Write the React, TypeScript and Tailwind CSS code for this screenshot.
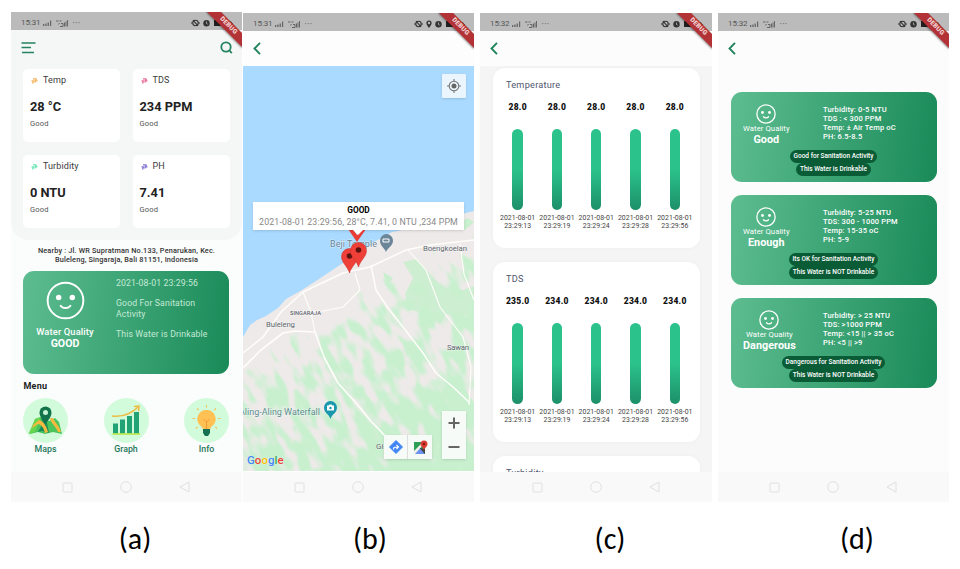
import React from "react";

function StatusBar({ time, pin = false }: { time: string; pin?: boolean }) {
  return (
    <div className="flex h-[18px] shrink-0 items-center justify-between bg-[#bbbbbb] pl-[10px] pr-[9px] pt-[4px] text-[8px] leading-none text-[#555]">
      <div className="flex items-center gap-[3px]">
        <span className="tracking-[-0.100px]">{time}</span>
        <svg width="10" height="6" viewBox="0 0 10 6" fill="#666">
          <path d="M0 4h1.3v2H0zM2.3 3.4h1.3V6H2.3zM4.6 2.4h1.3V6H4.6zM7 .6h1.2V6H7z" />
        </svg>
        <svg width="13" height="7" viewBox="0 0 13 7" fill="none" stroke="#666" strokeWidth="1">
          <path d="M0 1h2.5M3.5 1h2M2.5 4.5l1-1.5M4 6.5h3M5 3.500h2v3M8.500 6.500v-4M10 6.500v-5M11.500 6.500V0" />
        </svg>
        <span className="text-[8px] font-bold tracking-[0.300px] text-[#777]">···</span>
      </div>
      <div className="flex items-center gap-[3px]">
        <svg width="9" height="8" viewBox="0 0 9 8" fill="none" stroke="#333" strokeWidth="1.100">
          <path d="M0 4h1.600M7.400 4H9M2 1.200l5 5.600" />
          <circle cx="4.500" cy="4" r="2.700" />
        </svg>
        {pin && (
          <svg width="6" height="8" viewBox="0 0 6 8">
            <path d="M3 8C1.400 5.800.400 4.400.400 3a2.600 2.600 0 0 1 5.200 0C5.600 4.400 4.600 5.800 3 8z" fill="#333" />
            <circle cx="3" cy="3" r="1.200" fill="#bbb" />
          </svg>
        )}
        <svg width="7" height="8" viewBox="0 0 7 8">
          <circle cx="3.500" cy="4.200" r="3.200" fill="#333" />
          <path d="M3.500 2.500v2l1.200.600M.400.800l1.200-.600M5.400.200l1.200.600" stroke="#bbb" strokeWidth=".8" fill="none" />
        </svg>
        <svg width="20" height="8" viewBox="0 0 20 8">
          <rect x="1" y="1" width="7" height="6" fill="#222" />
          <path d="M11 1v6h2M15 6l3-4M18.500 3v3M17 4.500h3" stroke="#444" fill="none" />
        </svg>
      </div>
    </div>
  );
}

function DebugRibbon() {
  return (
    <div className="pointer-events-none absolute right-0 top-0 size-[42px] overflow-hidden">
      <div className="absolute left-[2.500px] top-[9.300px] flex h-[10.200px] w-[50px] rotate-45 items-center justify-center bg-[#b23235] text-[6.500px] font-black tracking-[0.200px] text-[#f3d5d5] shadow-[0_1px_2px_rgba(0,0,0,0.400)]">
        DEBUG
      </div>
    </div>
  );
}

function NavBar() {
  return (
    <div className="flex h-[30px] shrink-0 items-center justify-center gap-[47px] bg-[#f9f9f9] pr-px">
      <svg width="11" height="11" viewBox="0 0 11 11" fill="none" stroke="#e0e0e0">
        <rect x="1" y="1" width="9" height="9" rx="1" />
      </svg>
      <svg width="12" height="12" viewBox="0 0 12 12" fill="none" stroke="#e0e0e0">
        <circle cx="6" cy="6" r="5.300" />
      </svg>
      <svg width="11" height="12" viewBox="0 0 11 12" fill="none" stroke="#e0e0e0" strokeLinejoin="round">
        <path d="M10 1v10L1 6z" />
      </svg>
    </div>
  );
}

function BackHeader() {
  return (
    <div className="h-[35px] shrink-0 pl-[10px] pt-[11px]">
      <svg width="8" height="13" viewBox="0 0 8 13" fill="none" stroke="#20835c" strokeWidth="1.900">
        <path d="M7 .800L1.500 6.500 7 12.200" />
      </svg>
    </div>
  );
}

function Smiley({ size, stroke }: { size: number; stroke: number }) {
  return (
    <svg width={size} height={size} viewBox="0 0 40 40" fill="none" stroke="#fff" strokeWidth={stroke} strokeLinecap="round" className="shrink-0">
      <circle cx="20" cy="20" r="18.300" />
      <circle cx="13" cy="17" r="2.800" fill="#fff" stroke="none" />
      <circle cx="27" cy="17" r="2.800" fill="#fff" stroke="none" />
      <path d="M15 25.500c2.500 3 7.500 3 10 0" />
    </svg>
  );
}

function Metric({ color, name, value }: { color: string; name: string; value: string }) {
  return (
    <div className="flex h-[73px] w-[97px] flex-col rounded-[5px] bg-white pl-[7px] pt-[5px]">
      <div className="flex h-[14px] items-center gap-[5px] pl-px text-[9px] tracking-[0.100px] text-[#3a3a3a]">
        <svg width="7" height="6" viewBox="0 0 7 6" stroke={color} strokeWidth="1.300" fill="none" opacity=".85">
          <path d="M2 .800h3.500M.500 2.800h2M3.500 2.800h3M1.500 5.500l1.200-3M3.800 4.500L5.500.800" />
        </svg>
        {name}
      </div>
      <div className="mt-[10px] h-[18px] text-[12.800px] font-bold leading-[18px] text-[#222]">{value}</div>
      <div className="mt-[3px] h-[10px] text-[7.600px] leading-[10px] tracking-[0.100px] text-[#555]">Good</div>
    </div>
  );
}

function MapsIcon() {
  return (
    <svg width="45" height="45" viewBox="0 0 45 45">
      <circle cx="22.500" cy="22.500" r="22.500" fill="#d2fbdc" />
      <path d="M12 21l6-2 8 4 6-3 4 4 3 12-9-2-8 2-7-2-8 2z" fill="#4bc45c" />
      <path d="M12 21l6-2-6 15-6.500 2z" fill="#69d650" />
      <path d="M18 20l6 5 2 10-7-2-4 1 5-9z" fill="#188c58" />
      <path d="M10 27l6-5c4 1 7 5 9 12l-3 1c-1-5-4-9-7-9l-6 4zM27 20h3c2 5 6 7 8 14h-3c-2-6-7-8-8-14z" fill="#f7b840" />
      <path d="M22.500 26c-4-5-6-8-6-11.500a6 6 0 0 1 12 0c0 3.500-2 6.500-6 11.500z" fill="#13744b" />
      <circle cx="22.500" cy="14.500" r="2.500" fill="#c7f3d6" />
    </svg>
  );
}

function GraphIcon() {
  return (
    <svg width="45" height="45" viewBox="0 0 45 45">
      <circle cx="22.500" cy="22.500" r="22.500" fill="#d2fbdc" />
      <path d="M9 25.500h5v10H9zM16 21.500h5v14h-5zM23 18h5v17.500h-5zM30 14h5v21.500h-5z" fill="#22a375" />
      <path d="M8.500 36h27.500" stroke="#b6e63c" strokeWidth="1.500" />
      <path d="M8 18c9 1 19-2 26-9M30 8.500l5-.5-.500 5" fill="none" stroke="#edbc42" strokeWidth="1.500" />
    </svg>
  );
}

function InfoIcon() {
  return (
    <svg width="45" height="45" viewBox="0 0 45 45">
      <circle cx="22.500" cy="22.500" r="22.500" fill="#d2fbdc" />
      <path d="M22.500 12a9 9 0 0 0-6 15.800c1.700 1.600 2.300 2.700 2.500 4.200h7c.2-1.500.8-2.600 2.500-4.200A9 9 0 0 0 22.500 12z" fill="#ffc154" />
      <path d="M22.500 31v-8m-3-2l3 3 3-3" stroke="#f49a34" fill="none" />
      <path d="M19 31h7v4l-2 3h-3l-2-3z" fill="#167052" />
      <path d="M22.500 7v2.500M13 10.500l1.700 1.700M32 10.500l-1.700 1.700M8.500 20.500h2.500M36.500 20.500H34M12 30.500l1.500-1.500M33 30.500L31.500 29" stroke="#efc65b" strokeWidth="1.200" />
    </svg>
  );
}

const menu = [
  { label: "Maps", icon: <MapsIcon /> },
  { label: "Graph", icon: <GraphIcon /> },
  { label: "Info", icon: <InfoIcon /> },
];

function HomeScreen() {
  return (
    <Phone time="15:31" className="h-[490px] w-[231px] bg-[#fbfcfc]">
      <div className="flex h-[210px] shrink-0 flex-col rounded-b-[18px] bg-[#f5f7f7] pl-[12px] pr-[12.500px]">
        <div className="flex h-[38.500px] items-start justify-between pt-[12px]">
          <svg width="15" height="12" viewBox="0 0 15 12" fill="none" stroke="#24845f" strokeWidth="1.600" className="-ml-[2px]">
            <path d="M.500 1h14M.500 5.500h9.500M1 10.500h12" />
          </svg>
          <svg width="13" height="13" viewBox="0 0 13 13" fill="none" stroke="#24845f" strokeWidth="1.800" className="-mr-[3px] -mt-px">
            <circle cx="6" cy="6" r="4.700" />
            <path d="M9.500 9.500l2.300 2.600" />
          </svg>
        </div>
        <div className="flex flex-wrap justify-between gap-y-[13px]">
          <Metric color="#f3a33b" name="Temp" value="28 °C" />
          <Metric color="#e8528a" name="TDS" value="234 PPM" />
          <Metric color="#4fe0a8" name="Turbidity" value="0 NTU" />
          <Metric color="#6c57c9" name="PH" value="7.41" />
        </div>
      </div>
      <div className="mt-[6px] whitespace-nowrap text-center text-[7.300px] font-medium leading-[9px] tracking-[0.170px] text-[#333]">
        Nearby : Jl. WR Supratman No.133, Penarukan, Kec.
        <br />
        Buleleng, Singaraja, Bali 81151, Indonesia
      </div>
      <div className="ml-[12px] mr-[13px] mt-[6.500px] flex h-[103.500px] shrink-0 rounded-[11px] bg-linear-[97deg] from-[#5dbd90] to-[#1a8a59]">
        <div className="flex w-[84px] flex-col items-center pt-[10px] text-[9.300px] font-medium text-white">
          <Smiley size={39} stroke={2} />
          <div className="mt-[6px] h-[12px] leading-[12px] tracking-[0.150px]">Water Quality</div>
          <div className="text-[10.600px] font-bold leading-[12px]">GOOD</div>
        </div>
        <div className="ml-[9px] whitespace-nowrap pt-[7px] text-[8.700px] leading-[10.500px] tracking-[0.130px] text-[#c4ead6]">
          <div>2021-08-01 23:29:56</div>
          <div className="mt-[10px]">
            Good For Sanitation
            <br />
            Activity
          </div>
          <div className="mt-[10px]">This Water is Drinkable</div>
        </div>
      </div>
      <div className="ml-[12.500px] mt-[6px] text-[9px] font-bold leading-[13px] tracking-[0.200px] text-[#222]">Menu</div>
      <div className="ml-[12px] mr-[13px] mt-[5px] flex justify-between">
        {menu.map((item) => (
          <div key={item.label} className="flex flex-col items-center">
            {item.icon}
            <div className="text-[8.800px] font-medium leading-[13px] text-[#24785a]">{item.label}</div>
          </div>
        ))}
      </div>
    </Phone>
  );
}

function Marker({ x, y }: { x: number; y: number }) {
  return (
    <g transform={`translate(${x} ${y})`}>
      <path d="M0 0C-2-7-8-10-8-16.500a8 8 0 0 1 16 0C8-10 2-7 0 0z" fill="#ee4038" stroke="#c52f2c" strokeWidth=".5" />
      <circle cx="0" cy="-17" r="2.800" fill="#5d1411" />
    </g>
  );
}

function MapCanvas() {
  const coast = "M231 145l-16 4-18 4-22 8-26 5-16 9-15 11-21 13-24 16-14 9-16 9-8 9-12 8-9 4-7 5-7 12V405h231z";
  return (
    <svg width="231" height="405" viewBox="0 0 231 405" className="absolute inset-0">
      <defs>
        <clipPath id="land">
          <path d={coast} />
        </clipPath>
        <linearGradient id="density" x1="0" y1="0" x2="0" y2="1">
          <stop offset="0.360" stopColor="#000" stopOpacity="0" />
          <stop offset="0.470" stopColor="#000" stopOpacity="0.440" />
          <stop offset="0.620" stopColor="#000" stopOpacity="0.520" />
          <stop offset="0.740" stopColor="#000" stopOpacity="0.680" />
        </linearGradient>
        <filter id="terrain" x="0" y="0" width="1" height="1" colorInterpolationFilters="sRGB">
          <feTurbulence type="fractalNoise" baseFrequency="0.090 0.040" numOctaves="2" seed="8" />
          <feColorMatrix values="0 0 0 0 0  0 0 0 0 0  0 0 0 0 0  1 0 0 0 0" result="noise" />
          <feComposite in="SourceAlpha" in2="noise" operator="arithmetic" k1="0" k2="1" k3="1" k4="-0.880" />
          <feComponentTransfer result="mask">
            <feFuncA type="linear" slope="5" />
          </feComponentTransfer>
          <feFlood floodColor="#c8f0cf" />
          <feComposite in2="mask" operator="in" />
        </filter>
      </defs>
      <rect width="231" height="405" fill="#aadaff" />
      <g clipPath="url(#land)">
        <rect width="231" height="405" fill="#eeeae9" />
        <g transform="rotate(-28 115 280)">
          <rect x="-120" y="20" width="480" height="520" fill="url(#density)" filter="url(#terrain)" />
        </g>
        <path d="M160 196l14-3 14 16 12 12 20 3 11-4v24l-16 8-12-4-6 10-16-12-14-2-5-16 8-16z" fill="#c8efce" opacity=".85" />
        <path d="M214 160l10-8 7 4-9 8zM140 206l10 6-6 8z" fill="#c8efce" />
        <g fill="none" stroke="#fffdfa" strokeLinejoin="round">
          <path d="M0 287l20-16 18-25 22-20 40-19 27-6 36-17 24-5 44-5" strokeWidth="1.500" />
          <path d="M0 302l18-18 22-17 12-2 20 1 9 25 14 26 18 20 14 17 16 17" strokeWidth="1.600" />
          <path d="M128 199l5 25 12 18 15 19 20 26 13 20 17 14 17 16" strokeWidth="1.500" />
          <path d="M60 226l8 20 4 20M50 246l30-1 20-4 17-17-5-17M165 184l18 20 14 37 23 30 8 30-2 38M217 178l4 30 10 26" strokeWidth="1.100" />
        </g>
      </g>
      <g className="font-[Roboto]" fontSize="8.500" fill="#5d666e" stroke="#fff" strokeOpacity=".5" strokeWidth="1" paintOrder="stroke">
        <text x="87" y="180.500" fontSize="9" fill="#6b8496" textLength="47">Beji Temple</text>
        <text x="180" y="185" fontSize="7.800" textLength="44">Boengkoelan</text>
        <text x="47" y="248.500" fontSize="5.800" fontWeight="500" textLength="31">SINGARAJA</text>
        <text x="23" y="261" fontSize="7.800" textLength="29">Buleleng</text>
        <text x="204" y="283.500" fontSize="7.800" textLength="22">Sawan</text>
        <text x="-4" y="349" fontSize="9" fill="#5b8d8d" textLength="81">Aling-Aling Waterfall</text>
        <text x="133" y="383" fontSize="8">Gi</text>
      </g>
      <path d="M143 186c-1.500-4-6-6-6-11.500a6.500 6.500 0 0 1 13 0c0 5.500-5.500 7.500-7 11.500z" fill="#6b8699" />
      <path d="M140 173h6v3h-6z" fill="none" stroke="#fff" />
      <path d="M87.500 353c-1.500-5-6.500-6-6.500-11.500a6.500 6.500 0 0 1 13 0c0 5.500-5 6.500-6.500 11.500z" fill="#1997ad" />
      <path d="M84 339.500h1.500l1-1h2l1 1H91v5h-7z" fill="#fff" />
      <circle cx="87.500" cy="342" r="1.200" fill="#1997ad" />
      <path d="M105 163l9 13 9-13h-5l-4 6-4-6z" fill="#e93d37" />
      <Marker x={106.500} y={207} />
      <Marker x={115.500} y={201} />
    </svg>
  );
}

function MapScreen() {
  return (
    <Phone time="15:31" pin className="mt-px h-[489px] w-[231px] bg-[#fdfdfd]">
      <BackHeader />
      <div className="relative h-[405px] shrink-0 overflow-hidden">
        <MapCanvas />
        <div className="absolute right-[8px] top-[8px] flex size-[24px] items-center justify-center rounded-[1px] bg-[#eaf5fd] shadow-sm">
          <svg width="14" height="14" viewBox="0 0 14 14" fill="none" stroke="#777" strokeWidth="1.100">
            <circle cx="7" cy="7" r="4.800" />
            <circle cx="7" cy="7" r="2.500" fill="#666" stroke="none" />
            <path d="M7 0v2.500M7 11.500V14M0 7h2.500M11.500 7H14" />
          </svg>
        </div>
        <div className="absolute left-[10px] top-[136px] h-[28px] w-[211px] bg-white pt-[3px] text-center shadow-sm">
          <div className="text-[8.300px] font-bold leading-[11px] text-black">GOOD</div>
          <div className="whitespace-nowrap text-[8.800px] leading-[12px] tracking-[0.140px] text-[#888]">2021-08-01 23:29:56, 28°C, 7.41, 0 NTU ,234 PPM</div>
        </div>
        <div className="absolute left-[110px] top-[164px]">
          <svg width="10" height="5" viewBox="0 0 10 5" fill="#fff">
            <path d="M0 0h10L5 5z" />
          </svg>
        </div>
        <div className="absolute bottom-[4px] left-[4px] text-[11.500px] font-medium leading-[14px] [text-shadow:0_0_1px_#fff]">
          <span className="text-[#4285f4]">G</span>
          <span className="text-[#ea4335]">o</span>
          <span className="text-[#fbbc05]">o</span>
          <span className="text-[#4285f4]">g</span>
          <span className="text-[#34a853]">l</span>
          <span className="text-[#ea4335]">e</span>
        </div>
        <div className="absolute bottom-[12px] left-[141px] flex h-[24px] w-[48px] divide-x divide-[#ddd] bg-[#f7fbf8] shadow-sm">
          <div className="flex w-[24px] items-center justify-center">
            <svg width="14" height="14" viewBox="0 0 14 14">
              <path d="M7 .500L13.500 7 7 13.500.500 7z" fill="#4285f4" stroke="#4285f4" strokeLinejoin="round" />
              <path d="M4.500 9.500c0-2 .5-2.500 4-2.500M7.500 5l2 2-2 2" fill="none" stroke="#fff" strokeWidth="1.200" />
            </svg>
          </div>
          <div className="flex w-[24px] items-center justify-center">
            <svg width="15" height="15" viewBox="0 0 15 15">
              <rect x="1" y="2" width="11" height="12" fill="#2d9e58" />
              <path d="M1 14l6-6 5 6z" fill="#6c91ef" />
              <path d="M1 11l8-8 1.500 1.500L2 14H1z" fill="#f3f2e9" />
              <path d="M6.500 8l5.500 6V9z" fill="#444" />
              <path d="M11 10c-1-2.500-3.500-3.500-3.500-6a3.500 3.500 0 0 1 7 0c0 2.500-2.500 3.500-3.500 6z" fill="#dc3c32" />
              <circle cx="11" cy="4" r="1.200" fill="#7d1915" />
            </svg>
          </div>
        </div>
        <div className="absolute bottom-[12px] right-[8px] flex h-[48px] w-[24px] flex-col items-center justify-around bg-[#f7fbf8] shadow-sm">
          <svg width="12" height="12" viewBox="0 0 12 12" stroke="#666" strokeWidth="2">
            <path d="M.500 6h11M6 .500v11" />
          </svg>
          <svg width="12" height="12" viewBox="0 0 12 12" stroke="#666" strokeWidth="2">
            <path d="M.500 6h11" />
          </svg>
        </div>
      </div>
    </Phone>
  );
}

const times = ["23:29:13", "23:29:19", "23:29:24", "23:29:28", "23:29:56"];

function ChartCard({ title, values }: { title: string; values: string[] }) {
  return (
    <div className="h-[180px] shrink-0 rounded-[12px] bg-white px-[5px] pt-[10px] shadow-[0_0_5px_rgba(0,0,0,0.030)]">
      <div className="pl-[8.500px] text-[9.200px] leading-[14px] tracking-[0.230px] text-[#50566f]">{title}</div>
      <div className="mt-[7px] flex pl-[0.500px]">
        {values.map((v, i) => (
          <div key={i} className="flex w-[39.400px] flex-col items-center">
            <div className="pt-px text-[8.500px] font-black leading-[14px] tracking-[0.250px] text-[#111]">{v}</div>
            <div className="mt-[15px] h-[81px] w-[10.500px] rounded-full bg-linear-to-b from-[#2bc28b] from-50% to-[#1d9069]" />
            <div className="mt-[4px] whitespace-nowrap text-center text-[6.900px] leading-[8.300px] tracking-[0.050px] text-[#444]">
              2021-08-01
              <br />
              {times[i]}
            </div>
          </div>
        ))}
      </div>
    </div>
  );
}

function GraphScreen() {
  return (
    <Phone time="15:32" className="mt-px h-[489px] w-[232px] bg-[#f5f5f5]">
      <div className="bg-[#fcfcfc]">
        <BackHeader />
      </div>
      <div className="flex h-[406px] shrink-0 flex-col gap-[14px] overflow-hidden px-[12.500px] pt-[2px]">
        <ChartCard title="Temperature" values={["28.0", "28.0", "28.0", "28.0", "28.0"]} />
        <ChartCard title="TDS" values={["235.0", "234.0", "234.0", "234.0", "234.0"]} />
        <ChartCard title="Turbidity" values={[]} />
      </div>
    </Phone>
  );
}

const levels = [
  {
    name: "Good",
    specs: ["Turbidity: 0-5 NTU", "TDS : < 300 PPM", "Temp: ± Air Temp oC", "PH: 6.5-8.5"],
    notes: ["Good for Sanitation Activity", "This Water is Drinkable"],
  },
  {
    name: "Enough",
    specs: ["Turbidity: 5-25 NTU", "TDS: 300 - 1000 PPM", "Temp: 15-35 oC", "PH: 5-9"],
    notes: ["Its OK for Sanitation Activity", "This Water is NOT Drinkable"],
  },
  {
    name: "Dangerous",
    specs: ["Turbidity: > 25 NTU", "TDS: >1000 PPM", "Temp: <15 || > 35 oC", "PH: <5 || >9"],
    notes: ["Dangerous for Sanitation Activity", "This Water is NOT Drinkable"],
  },
];

function InfoScreen() {
  return (
    <Phone time="15:32" className="mt-px h-[489px] w-[231px] bg-[#fcfcfd]">
      <BackHeader />
      <div className="flex flex-col gap-[13px] px-[12.500px] pt-[26px]">
        {levels.map((l) => (
          <div key={l.name} className="h-[90px] rounded-[11px] bg-linear-[97deg] from-[#5dbd90] to-[#1a8a59]">
            <div className="flex h-[58px] pl-[12.500px] pt-[12px] text-white">
              <div className="w-[80px]">
                <div className="flex w-fit flex-col items-center">
                  <Smiley size={20} stroke={2.600} />
                  <div className="text-[7.700px] leading-[9px] tracking-[0.080px]">Water Quality</div>
                  <div className="text-[10.800px] font-bold leading-[13px] tracking-[0.050px]">{l.name}</div>
                </div>
              </div>
              <div className="whitespace-nowrap pt-[0.500px] text-[7.500px] font-medium leading-[9.050px] tracking-[0.150px]">
                {l.specs.map((s) => (
                  <div key={s}>{s}</div>
                ))}
              </div>
            </div>
            <div className="flex flex-col items-center gap-[0.500px]">
              {l.notes.map((n) => (
                <div key={n} className="h-[12.500px] rounded-full bg-[#0a5c36] px-[4px] text-[6.500px] font-medium leading-[12.500px] text-white">
                  {n}
                </div>
              ))}
            </div>
          </div>
        ))}
      </div>
    </Phone>
  );
}

function Phone({
  time,
  pin,
  className,
  children,
}: {
  time: string;
  pin?: boolean;
  className: string;
  children: React.ReactNode;
}) {
  return (
    <div className={`relative flex shrink-0 flex-col overflow-hidden ${className}`}>
      <StatusBar time={time} pin={pin} />
      {children}
      <div className="mt-auto">
        <NavBar />
      </div>
      <DebugRibbon />
    </div>
  );
}

export default function App() {
  return (
    <div className="h-[569px] w-[960px] overflow-hidden bg-white font-[Roboto,sans-serif]">
      <div className="flex h-[502px] items-start gap-[6px] pl-[11px] pt-[12px]">
        <div className="-mr-[5px]">
          <HomeScreen />
        </div>
        <MapScreen />
        <GraphScreen />
        <InfoScreen />
      </div>
      <div className="flex pl-[95px] pt-[20px] font-[Carlito,Lato,sans-serif] text-[30px] leading-[34px] text-black">
        <div className="w-[80px] text-center">(a)</div>
        <div className="ml-[155px] w-[80px] text-center">(b)</div>
        <div className="ml-[160px] w-[80px] text-center">(c)</div>
        <div className="ml-[167px] w-[80px] text-center">(d)</div>
      </div>
    </div>
  );
}
